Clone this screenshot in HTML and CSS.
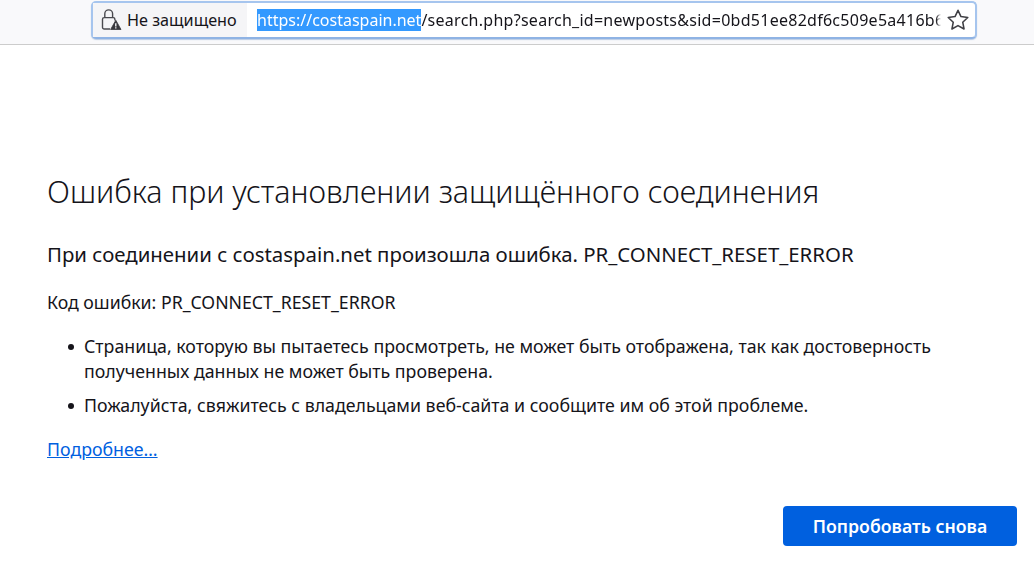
FILE: index.html
```html
<!DOCTYPE html>
<html lang="ru">
<head>
<meta charset="utf-8">
<title>Ошибка</title>
<link rel="stylesheet" href="styles.css">
</head>
<body>
<header class="toolbar">
  <div class="urlbar">
    <div class="identity">
      <svg class="lock" width="22" height="22" viewBox="0 0 22 22" fill="none">
        <path d="M3.8 9V4.8a3.9 3.9 0 0 1 7.8 0V9" stroke="#4a4a4f" stroke-width="1.4"/>
        <path d="M9 20H3.2A1.7 1.7 0 0 1 1.5 18.3v-8A1.7 1.7 0 0 1 3.2 8.6h9A1.7 1.7 0 0 1 13.9 10.3v1.2" stroke="#4a4a4f" stroke-width="1.4"/>
        <path d="M14.8 11.2l5.2 9.3H9.6z" fill="#38383d" stroke="#38383d" stroke-width=".8" stroke-linejoin="round"/>
        <path d="M14.8 14.2v3.2M14.8 18.2v1.3" stroke="#fff" stroke-width="1.3"/>
      </svg>
      <span class="identity-label">Не защищено</span>
    </div>
    <div class="url"><span class="sel">https://costaspain.net</span><span class="rest">/search.php?search_id=newposts&amp;sid=0bd51ee82df6c509e5a416b6c</span></div>
    <svg class="star" width="22" height="22" viewBox="1 1 20 20" fill="none">
      <path d="M11 2.2l2.7 5.7 6.2.8-4.6 4.3 1.2 6.2L11 16.1l-5.5 3.1 1.2-6.2-4.6-4.3 6.2-.8z" stroke="#3f3f44" stroke-width="1.4" stroke-linejoin="round"/>
    </svg>
  </div>
</header>
<main class="error">
  <h1 class="title">Ошибка при установлении защищённого соединения</h1>
  <p class="lead">При соединении с costaspain.net произошла ошибка. PR_CONNECT_RESET_ERROR</p>
  <p class="code">Код ошибки: PR_CONNECT_RESET_ERROR</p>
  <ul class="reasons">
    <li>Страница, которую вы пытаетесь просмотреть, не может быть отображена, так как достоверность полученных данных не может быть проверена.</li>
    <li>Пожалуйста, свяжитесь с владельцами веб-сайта и сообщите им об этой проблеме.</li>
  </ul>
  <a class="more" href="#">Подробнее…</a>
  <div class="actions"><button class="retry">Попробовать снова</button></div>
</main>
</body>
</html>
```
FILE: styles.css
```css
* { box-sizing: border-box; }
html, body { margin: 0; height: 100%; }
body {
  background: #fff;
  color: #15141a;
  font-family: "Noto Sans", sans-serif;
  overflow: hidden;
}
.toolbar {
  height: 45px;
  background: #f9f9fb;
  border-bottom: 1px solid #ccc;
  padding: 1px 57px 0 91px;
}
.urlbar {
  height: 38px;
  background: #fff;
  border: 2px solid #a6c5ee;
  border-bottom-color: #8fb3e4;
  border-radius: 5px;
  box-shadow: 0 1px 1px rgba(70, 120, 190, .35);
  display: flex;
  align-items: center;
  padding: 0 6px 0 0;
}
.identity {
  display: flex;
  align-items: center;
  gap: 4px;
  align-self: stretch;
  width: 154px;
  background: #f5f5f7;
  padding-left: 8px;
  flex: none;
}
.lock { flex: none; }
.identity-label { font-size: 16.2px; white-space: nowrap; }
.url {
  flex: 1;
  min-width: 0;
  margin-left: 10px;
  font-size: 16px;
  white-space: nowrap;
  overflow: hidden;
  line-height: 23px;
  -webkit-mask-image: linear-gradient(to left, transparent, #000 5px);
  mask-image: linear-gradient(to left, transparent, #000 5px);
}
.sel { background: #3399ff; color: #fff; }
.rest { letter-spacing: .27px; }
.star { flex: none; margin-left: 6px; }
.error { padding: 0 17px 0 47px; }
.title {
  margin: 126px 0 0;
  font-size: 30.4px;
  font-weight: 300;
  line-height: 42px;
  white-space: nowrap;
}
.lead { margin: 28px 0 0; font-size: 20.4px; line-height: 26px; white-space: nowrap; }
.code { margin: 23px 0 0; font-size: 17.7px; line-height: 24px; }
.reasons { list-style: none; margin: 20px 0 0; padding: 0 60px 0 37px; font-size: 17.75px; line-height: 25px; }
.reasons li { position: relative; }
.reasons li::before {
  content: "";
  position: absolute;
  left: -16px;
  top: 10px;
  width: 6px;
  height: 6px;
  border-radius: 50%;
  background: #15141a;
}
.reasons li + li { margin-top: 9px; }
.more { display: block; width: fit-content; margin-top: 19px; font-size: 17.75px; line-height: 25px; color: #0060df; }
.actions { display: flex; justify-content: flex-end; margin-top: 44px; }
.retry {
  width: 234px;
  height: 40px;
  border: 0;
  border-radius: 4px;
  background: #0060df;
  color: #fff;
  font: 600 17.7px "Noto Sans", sans-serif;
}
```
